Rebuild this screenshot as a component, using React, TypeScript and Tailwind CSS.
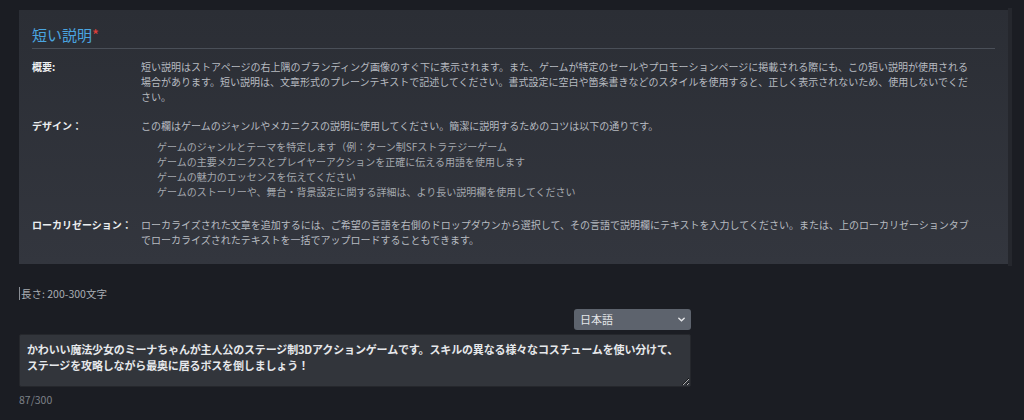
import { useState } from "react";

const rows = [
  "ゲームのジャンルとテーマを特定します（例：ターン制SFストラテジーゲーム",
  "ゲームの主要メカニクスとプレイヤーアクションを正確に伝える用語を使用します",
  "ゲームの魅力のエッセンスを伝えてください",
  "ゲームのストーリーや、舞台・背景設定に関する詳細は、より長い説明欄を使用してください",
];

export default function App() {
  const [text, setText] = useState(
    "かわいい魔法少女のミーナちゃんが主人公のステージ制3Dアクションゲームです。スキルの異なる様々なコスチュームを使い分けて、ステージを攻略しながら最奥に居るボスを倒しましょう！"
  );

  return (
    <div
      className="w-[1024px] h-[420px] overflow-hidden bg-[#1b1d23] text-[#c6c9ce] flex"
      style={{ fontFamily: '"Noto Sans CJK JP", "Noto Sans", sans-serif' }}
    >
      <div className="w-[1008px] pl-[19px] pt-[10px]">
        <div className="bg-gradient-to-b from-[#2b2e35] to-[#33363e] pl-[13px] pr-[13px] pt-[14px] pb-[17px]">
          <div className="border-b border-[#4a4f58] pb-[2px] text-[15px] leading-[22px] text-[#4aa5e0]">
            短い説明<span className="text-[#e0413a]">*</span>
          </div>

          <div className="mt-[10px] flex text-[10px] leading-[15px]">
            <div className="w-[109px] shrink-0 font-bold text-[#eceef0]">概要:</div>
            <div className="w-[835px] text-[#b7bbc1]">
              短い説明はストアページの右上隅のブランディング画像のすぐ下に表示されます。また、ゲームが特定のセールやプロモーションページに掲載される際にも、この短い説明が使用される場合があります。短い説明は、文章形式のプレーンテキストで記述してください。書式設定に空白や箇条書きなどのスタイルを使用すると、正しく表示されないため、使用しないでください。
            </div>
          </div>

          <div className="mt-[14px] flex text-[10px] leading-[15px]">
            <div className="w-[109px] shrink-0 font-bold text-[#eceef0]">デザイン：</div>
            <div className="text-[#b7bbc1]">
              <div>この欄はゲームのジャンルやメカニクスの説明に使用してください。簡潔に説明するためのコツは以下の通りです。</div>
              <ul className="mt-[6px] pl-[16px] text-[#a4a8ae]">
                {rows.map((r) => (
                  <li key={r}>{r}</li>
                ))}
              </ul>
            </div>
          </div>

          <div className="mt-[18px] flex text-[10px] leading-[15px]">
            <div className="w-[109px] shrink-0 font-bold text-[#eceef0]">ローカリゼーション：</div>
            <div className="w-[835px] text-[#b7bbc1]">
              ローカライズされた文章を追加するには、ご希望の言語を右側のドロップダウンから選択して、その言語で説明欄にテキストを入力してください。または、上のローカリゼーションタブでローカライズされたテキストを一括でアップロードすることもできます。
            </div>
          </div>
        </div>

        <div className="mt-[22px] flex items-center text-[10.5px] leading-[15px] text-[#a9adb3]">
          <span className="mr-[1px] h-[13px] w-px bg-[#8a8e95]" />
          長さ: 200-300文字
        </div>

        <div className="mt-[8px] w-[672px] flex flex-col items-end">
          <div className="flex h-[21px] w-[117px] items-center justify-between rounded-[3px] bg-[#5d636d] pl-[6px] pr-[5px] text-[11px] text-[#e4e6e9]">
            日本語
            <svg width="9" height="9" viewBox="0 0 10 10">
              <path d="M2 3.5 L5 6.5 L8 3.5" fill="none" stroke="#e4e6e9" strokeWidth="1.6" strokeLinecap="round" />
            </svg>
          </div>
          <textarea
            value={text}
            onChange={(e) => setText(e.target.value)}
            className="mt-[4px] h-[53px] w-[672px] resize-y rounded-[2px] border border-[#25272c] bg-[#32353b] px-[7px] py-[6px] text-[11px] font-bold leading-[16px] tracking-[-0.15px] text-[#e6e8eb] outline-none"
            style={{ fontFamily: '"Noto Sans CJK JP", sans-serif' }}
          />
        </div>

        <div className="mt-[6px] text-[10.5px] leading-[14px] text-[#7d8188]">{text.length}/300</div>
      </div>
      <div className="mt-[8px] h-[258px] w-[4px] bg-[#25272d]" />
    </div>
  );
}
